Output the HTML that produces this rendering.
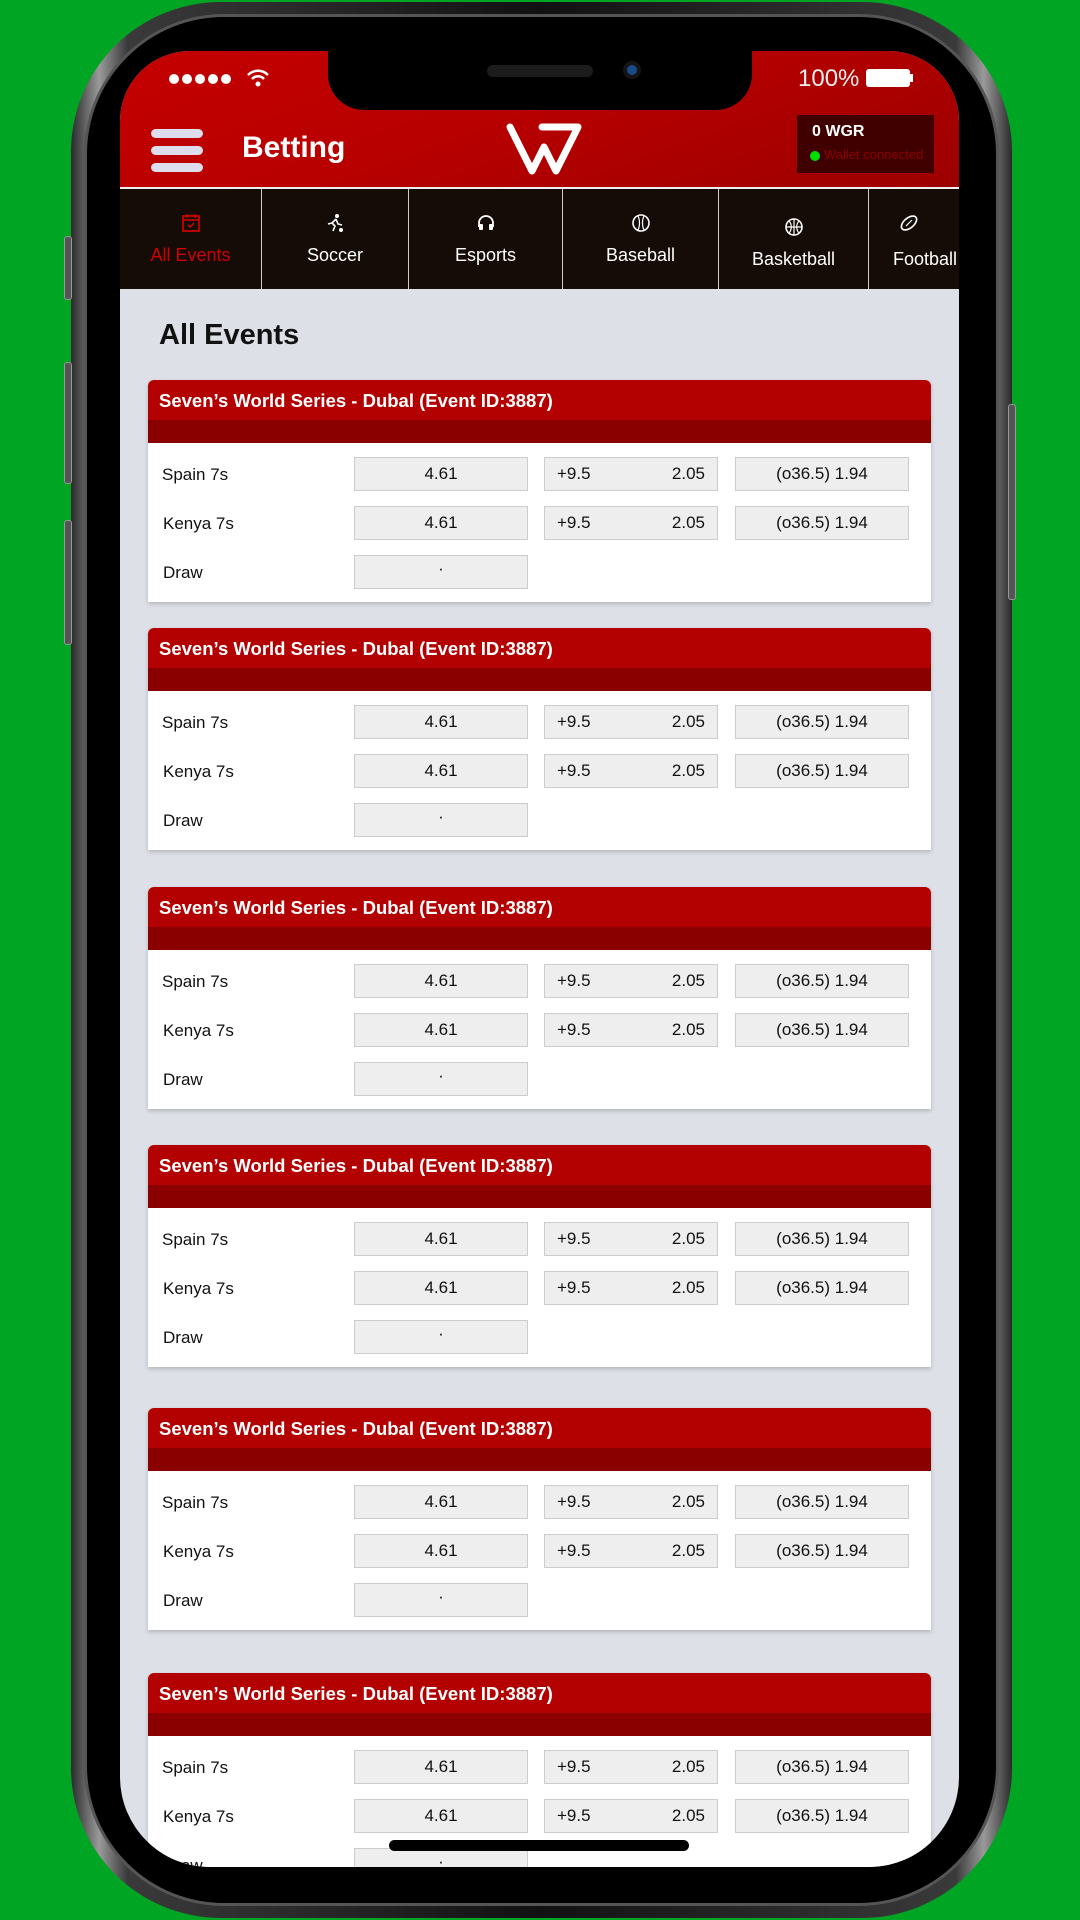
<!DOCTYPE html>
<html><head><meta charset="utf-8"><style>
*{margin:0;padding:0;box-sizing:border-box}
body{width:1080px;height:1920px;background:#00a524;position:relative;overflow:hidden;font-family:"Liberation Sans",Arial,sans-serif}
.abs{position:absolute}
.phone{left:71px;top:2px;width:941px;height:1916px;border-radius:150px;background:linear-gradient(90deg,#2a2a2a,#9a9a9a 3%,#3a3a3a 6%,#111 50%,#3a3a3a 94%,#9a9a9a 97%,#2a2a2a);}
.bez{left:84px;top:14px;width:915px;height:1892px;border-radius:140px;background:#000;border:3px solid #555}
.screen{left:120px;top:51px;width:839px;height:1816px;border-radius:70px 70px 90px 90px;overflow:hidden;background:#dde0e6}
.btn{background:#555;border:1px solid #999;border-radius:3px}
.hdr{left:0;top:0;width:839px;height:136px;background:linear-gradient(160deg,#c40000 0%,#b80000 45%,#9c0000 100%)}
.notch{left:208px;top:0;width:424px;height:59px;background:#000;border-radius:0 0 36px 36px}
.nav{left:0;top:136px;width:839px;height:102px;background:#150c08;border-top:2px solid #eee}
.tab{top:0;height:100px;border-right:1px solid #ccc;color:#fff;font-size:18px;text-align:center}
.tab span{position:absolute;left:0;right:0;top:56px}
.tab svg{position:absolute;left:50%;top:24px;margin-left:-10px}
.card{left:28px;width:783px;height:222px;background:#fff;border-radius:6px 6px 0 0;box-shadow:0 2px 4px rgba(0,0,0,.2);overflow:hidden}
.ct{height:40px;background:#b30000;color:#fff;font-weight:bold;font-size:18.5px;padding:10px 0 0 11px}
.cd{height:23px;background:#8a0000}
.lbl{left:14px;font-size:17px;color:#111}
.b{width:174px;height:34px;background:#eee;border:1px solid #ccc;font-size:17px;color:#111;text-align:center;line-height:32px}
.dot{top:23px;width:10px;height:10px;border-radius:50%;background:#fff}
</style></head><body>
<div class="abs phone"></div>
<div class="abs btn" style="left:64px;top:236px;width:8px;height:64px"></div>
<div class="abs btn" style="left:64px;top:362px;width:8px;height:122px"></div>
<div class="abs btn" style="left:64px;top:520px;width:8px;height:125px"></div>
<div class="abs btn" style="left:1008px;top:404px;width:8px;height:196px"></div>
<div class="abs bez"></div>
<div class="abs screen">
 <div class="abs hdr"></div>
 <div class="abs notch"></div>
 <div class="abs" style="left:367px;top:14px;width:106px;height:12px;background:#1c1c1c;border-radius:6px"></div>
 <div class="abs" style="left:503px;top:10px;width:18px;height:18px;background:#1a4a8a;border-radius:50%;border:4px solid #151515"></div>
 <div class="abs dot" style="left:49px"></div>
 <div class="abs dot" style="left:62px"></div>
 <div class="abs dot" style="left:75px"></div>
 <div class="abs dot" style="left:88px"></div>
 <div class="abs dot" style="left:101px"></div>
 <svg class="abs" style="left:126px;top:17px" width="24" height="20" viewBox="0 0 24 20"><path d="M2 7a14 14 0 0 1 20 0M6 11a8 8 0 0 1 12 0" stroke="#fff" stroke-width="2.5" fill="none"/><circle cx="12" cy="16" r="2.5" fill="#fff"/></svg>
 <div class="abs" style="left:678px;top:14px;color:#eee;font-size:24px">100%</div>
 <div class="abs" style="left:746px;top:18px;width:44px;height:18px;background:#fff;border-radius:3px"></div>
 <div class="abs" style="left:790px;top:23px;width:3px;height:8px;background:#fff"></div>
 <div class="abs" style="left:31px;top:78px;width:52px;height:9px;background:#dde;border-radius:5px"></div>
 <div class="abs" style="left:31px;top:95px;width:52px;height:9px;background:#dde;border-radius:5px"></div>
 <div class="abs" style="left:31px;top:112px;width:52px;height:9px;background:#dde;border-radius:5px"></div>
 <div class="abs" style="left:122px;top:80px;color:#fff;font-size:30px;font-weight:bold">Betting</div>
 <svg class="abs" style="left:382px;top:70px" width="82" height="56" viewBox="0 0 82 56"><path d="M8 6 L30 50 L42 26 L54 50 L76 6 L40 6" stroke="#fff" stroke-width="7" fill="none" stroke-linejoin="round" stroke-linecap="round"/></svg>
 <div class="abs" style="left:677px;top:64px;width:137px;height:58px;background:#400000"></div>
 <div class="abs" style="left:692px;top:72px;color:#fff;font-size:16px;font-weight:bold">0 WGR</div>
 <div class="abs" style="left:690px;top:100px;width:10px;height:10px;border-radius:50%;background:#0d0"></div>
 <div class="abs" style="left:704px;top:96px;color:#8b0000;font-size:13px">Wallet connected</div>
 <div class="abs nav">
  <div class="abs tab" style="left:0;width:142px;color:#d00000"><svg width="20" height="20" viewBox="0 0 20 20"><rect x="2" y="3" width="16" height="15" fill="none" stroke="#d00" stroke-width="1.6"/><path d="M2 7h16M6 1v4M14 1v4M7 12l2 2 4-4" stroke="#d00" stroke-width="1.4" fill="none"/></svg><span>All Events</span></div>
  <div class="abs tab" style="left:142px;width:147px"><svg width="20" height="20" viewBox="0 0 20 20"><circle cx="12" cy="3" r="2" fill="#fff"/><path d="M11 6l-4 4 3 3-2 5M11 6l2 5 4 1M7 10l-4 1" stroke="#fff" stroke-width="1.6" fill="none"/><circle cx="16" cy="17" r="2" fill="#fff"/></svg><span>Soccer</span></div>
  <div class="abs tab" style="left:289px;width:154px"><svg width="20" height="20" viewBox="0 0 20 20"><path d="M3 14v-4a7 7 0 0 1 14 0v4" stroke="#fff" stroke-width="1.8" fill="none"/><rect x="3" y="11" width="4" height="6" rx="1" fill="#fff"/><rect x="13" y="11" width="4" height="6" rx="1" fill="#fff"/></svg><span>Esports</span></div>
  <div class="abs tab" style="left:443px;width:156px"><svg width="20" height="20" viewBox="0 0 20 20"><circle cx="10" cy="10" r="8" stroke="#fff" stroke-width="1.6" fill="none"/><path d="M7 3c2 4 2 10 0 14M13 3c-2 4-2 10 0 14" stroke="#fff" stroke-width="1.2" fill="none"/></svg><span>Baseball</span></div>
  <div class="abs tab" style="left:599px;width:150px"><svg width="20" height="20" viewBox="0 0 20 20" style="top:28px"><circle cx="10" cy="10" r="8" stroke="#fff" stroke-width="1.6" fill="none"/><path d="M2 10h16M10 2v16M5 4c3 3 3 9 0 12M15 4c-3 3-3 9 0 12" stroke="#fff" stroke-width="1.2" fill="none"/></svg><span style="top:60px">Basketball</span></div>
  <div class="abs tab" style="left:749px;width:150px;border:none;text-align:left"><svg width="20" height="20" viewBox="0 0 20 20" style="left:30px;margin:0"><ellipse cx="10" cy="10" rx="9" ry="5" transform="rotate(-40 10 10)" stroke="#fff" stroke-width="1.6" fill="none"/><path d="M7 13l6-6" stroke="#fff" stroke-width="1.2"/></svg><span style="left:24px;top:60px">Football</span></div>
 </div>
 <div class="abs" style="left:39px;top:268px;font-size:29px;font-weight:bold;color:#111">All Events</div>
 <div id="cards"></div>
 <div class="abs" style="left:269px;top:1789px;width:300px;height:11px;background:#000;border-radius:6px"></div>
</div>
<script>
var tops=[329,577,836,1094,1357,1622],h='';
tops.forEach(function(t){
h+='<div class="abs card" style="top:'+t+'px"><div class="ct">Seven’s World Series - Dubal (Event ID:3887)</div><div class="cd"></div>'+
'<div class="abs lbl" style="top:85px">Spain 7s</div><div class="abs lbl" style="top:134px;left:15px">Kenya 7s</div><div class="abs lbl" style="top:183px;left:15px">Draw</div>';
[77,126].forEach(function(y){
h+='<div class="abs b" style="left:206px;top:'+y+'px">4.61</div><div class="abs b" style="left:396px;top:'+y+'px;text-align:left;padding:0 12px">+9.5<span style="float:right">2.05</span></div><div class="abs b" style="left:587px;top:'+y+'px">(o36.5) 1.94</div>';});
h+='<div class="abs b" style="left:206px;top:175px;line-height:26px">·</div></div>';});
document.getElementById('cards').outerHTML=h;
</script>
</body></html>
